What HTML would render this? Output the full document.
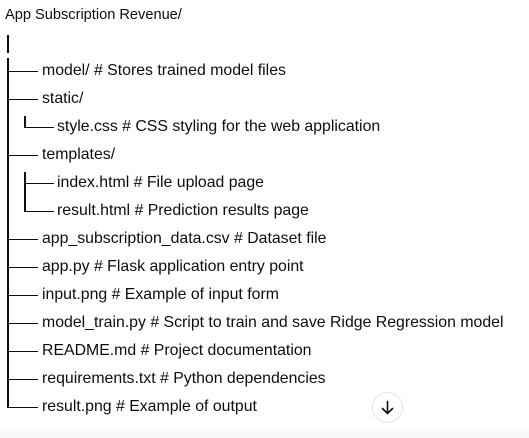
<!DOCTYPE html>
<html><head><meta charset="utf-8"><style>
body{margin:0;width:529px;height:438px;background:#fff;position:relative;overflow:hidden;font-family:"Liberation Sans",sans-serif;font-size:15.85px;color:#0d0d0d}
.t{position:absolute;white-space:nowrap;line-height:20px}
.v,.h{position:absolute;background:#0d0d0d}
.h{height:1.4px}
.v{width:1.6px}
.band{position:absolute;left:0;top:428px;width:529px;height:10px;background:#f9f9f9}
.btn{position:absolute;left:372px;top:392px;width:31px;height:31px;border:1px solid #e3e3e3;border-radius:50%;background:#fff;box-sizing:border-box}
</style></head><body>
<div class="t" style="left:5px;top:5px;font-size:14.6px">App Subscription Revenue/</div>
<div class="v" style="left:7px;top:35px;height:18px"></div>
<div class="v" style="left:7px;top:58px;height:349px"></div>
<div class="h" style="left:7px;top:71px;width:31px"></div>
<div class="h" style="left:7px;top:99px;width:31px"></div>
<div class="h" style="left:7px;top:155px;width:31px"></div>
<div class="h" style="left:7px;top:239px;width:31px"></div>
<div class="h" style="left:7px;top:267px;width:31px"></div>
<div class="h" style="left:7px;top:295px;width:31px"></div>
<div class="h" style="left:7px;top:323px;width:31px"></div>
<div class="h" style="left:7px;top:351px;width:31px"></div>
<div class="h" style="left:7px;top:379px;width:31px"></div>
<div class="h" style="left:7px;top:407px;width:31px"></div>
<div class="v" style="left:24px;top:116px;height:11px"></div>
<div class="h" style="left:24px;top:127px;width:30px"></div>
<div class="v" style="left:24px;top:172px;height:39px"></div>
<div class="h" style="left:24px;top:183px;width:30px"></div>
<div class="h" style="left:24px;top:211px;width:30px"></div>
<div class="t" style="left:42px;top:61px">model/ # Stores trained model files</div>
<div class="t" style="left:42px;top:89px">static/</div>
<div class="t" style="left:57px;top:117px">style.css # CSS styling for the web application</div>
<div class="t" style="left:42px;top:145px">templates/</div>
<div class="t" style="left:57px;top:173px">index.html # File upload page</div>
<div class="t" style="left:57px;top:201px">result.html # Prediction results page</div>
<div class="t" style="left:42px;top:229px">app_subscription_data.csv # Dataset file</div>
<div class="t" style="left:42px;top:257px">app.py # Flask application entry point</div>
<div class="t" style="left:42px;top:285px">input.png # Example of input form</div>
<div class="t" style="left:42px;top:313px">model_train.py # Script to train and save Ridge Regression model</div>
<div class="t" style="left:42px;top:341px">README.md # Project documentation</div>
<div class="t" style="left:42px;top:369px">requirements.txt # Python dependencies</div>
<div class="t" style="left:42px;top:397px">result.png # Example of output</div>
<div class="band"></div>
<div class="btn"><svg width="29" height="29" viewBox="0 0 29 29" style="position:absolute;left:0;top:0"><path d="M14.5 8.5v12M9.5 15.5l5 5 5-5" fill="none" stroke="#0d0d0d" stroke-width="1.6" stroke-linecap="round" stroke-linejoin="round"/></svg></div>
</body></html>
